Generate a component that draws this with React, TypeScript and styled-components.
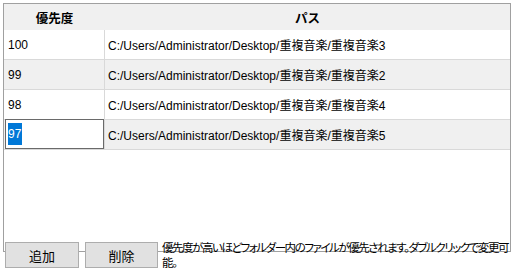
import React, { FC } from 'react';
import styled, { createGlobalStyle } from 'styled-components';

const GlobalStyle = createGlobalStyle`
  html, body {
    margin: 0;
    padding: 0;
    background: #ffffff;
  }
  body {
    font-family: 'Liberation Sans', 'Noto Sans CJK JP', sans-serif;
    font-size: 12px;
    color: #000000;
  }
`;

const Page = styled.div`
  width: 515px;
  height: 270px;
  padding: 3px 0 0 3px;
  box-sizing: border-box;
  overflow: hidden;
`;

const Frame = styled.div`
  width: 508px;
  height: 249px;
  box-sizing: border-box;
  border: 1px solid #a0a0a0;
  background: #ffffff;
  display: flex;
  flex-direction: column;
`;

const Header = styled.div`
  display: grid;
  grid-template-columns: 101px 1fr;
  height: 26px;
  background: #f0f0f0;
`;

const HeaderCell = styled.div`
  display: flex;
  align-items: center;
  justify-content: center;
  font-family: 'Noto Sans CJK JP', sans-serif;
  font-weight: bold;
  font-size: 12.5px;
`;

const Row = styled.div<{ $alt: boolean }>`
  display: grid;
  grid-template-columns: 101px 1fr;
  height: 30px;
  box-sizing: border-box;
  border-bottom: 1px solid #d9d9d9;
  background: ${p => (p.$alt ? '#f0f0f0' : '#ffffff')};
`;

const PriorityCell = styled.div`
  display: flex;
  align-items: center;
  padding-left: 4px;
  border-right: 1px solid #d9d9d9;
`;

const PathCell = styled.div`
  display: flex;
  align-items: center;
  padding-left: 3px;
  white-space: nowrap;
`;

const EditCell = styled.div`
  display: flex;
  align-items: center;
  border-right: 1px solid #d9d9d9;
  padding-left: 1px;
`;

const EditBox = styled.div`
  width: 99px;
  height: 30px;
  margin-top: -1px;
  box-sizing: border-box;
  border: 1px solid #6a6a6a;
  background: #ffffff;
  display: flex;
  align-items: center;
  padding-left: 2px;
`;

const Selected = styled.span`
  background: #0078d7;
  color: #ffffff;
  line-height: 22px;
  padding-right: 1px;
`;

const BottomBar = styled.div`
  display: flex;
  align-items: flex-start;
  margin-top: -10px;
  padding-left: 2px;
`;

const Button = styled.button<{ $w: number }>`
  flex-shrink: 0;
  width: ${p => p.$w}px;
  height: 26px;
  margin-right: 6px;
  box-sizing: border-box;
  border: 1px solid #adadad;
  background: #e1e1e1;
  font-family: 'Noto Sans CJK JP', sans-serif;
  font-size: 13px;
  color: #000000;
  padding: 0;
`;

const Hint = styled.div`
  flex-shrink: 0;
  margin-left: -2px;
  margin-top: -2px;
  font-family: 'Noto Sans CJK JP', sans-serif;
  font-size: 11.5px;
  line-height: 15px;
  letter-spacing: -1.45px;
  font-feature-settings: 'palt';
  white-space: nowrap;
`;

type Entry = { priority: number; path: string };

const entries: Entry[] = [
  { priority: 100, path: 'C:/Users/Administrator/Desktop/重複音楽/重複音楽3' },
  { priority: 99, path: 'C:/Users/Administrator/Desktop/重複音楽/重複音楽2' },
  { priority: 98, path: 'C:/Users/Administrator/Desktop/重複音楽/重複音楽4' },
  { priority: 97, path: 'C:/Users/Administrator/Desktop/重複音楽/重複音楽5' },
];

const editing = 3;

const App: FC = () => {
  return (
    <Page>
      <GlobalStyle />
      <Frame>
        <Header>
          <HeaderCell>優先度</HeaderCell>
          <HeaderCell>パス</HeaderCell>
        </Header>
        {entries.map((e, i) => (
          <Row key={e.priority} $alt={i % 2 === 1}>
            {i === editing ? (
              <EditCell>
                <EditBox>
                  <Selected>{e.priority}</Selected>
                </EditBox>
              </EditCell>
            ) : (
              <PriorityCell>{e.priority}</PriorityCell>
            )}
            <PathCell>{e.path}</PathCell>
          </Row>
        ))}
      </Frame>
      <BottomBar>
        <Button $w={74}>追加</Button>
        <Button $w={73}>削除</Button>
        <Hint>
          優先度が高いほどフォルダー内のファイルが優先されます。ダブルクリックで変更可
          <br />
          能。
        </Hint>
      </BottomBar>
    </Page>
  );
};

export default App;
